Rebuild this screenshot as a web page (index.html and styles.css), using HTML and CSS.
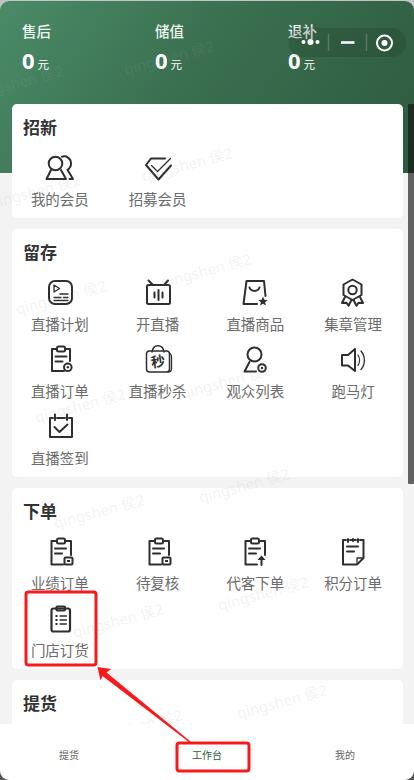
FILE: index.html
```html
<!DOCTYPE html>
<html lang="zh">
<head>
<meta charset="utf-8">
<title>工作台</title>
<link rel="stylesheet" href="styles.css">
</head>
<body>
<div class="screen">
  <main class="content">
    <header class="hero">
      <div class="stats">
        <div class="stat"><div class="stat-label">售后</div><div class="stat-value"><b>0</b><span>元</span></div></div>
        <div class="stat"><div class="stat-label">储值</div><div class="stat-value"><b>0</b><span>元</span></div></div>
        <div class="stat"><div class="stat-label">退补</div><div class="stat-value"><b>0</b><span>元</span></div></div>
      </div>
    </header>
    <div class="cards">
      <section class="card">
        <h2>招新</h2>
        <div class="grid">
          <div class="item">
            <svg class="icon" viewBox="44 151 32 32"><circle cx="55.500" cy="162.500" r="6.800"/><path d="M51 169 46.500 178H66L61 169"/><path d="M62 155.700C66 154.500 71 157 71 162.500 71 165.500 69.500 167.500 67.500 168.800L73 178H69.500"/></svg>
            <span>我的会员</span>
          </div>
          <div class="item">
            <svg class="icon" viewBox="142 151 32 32"><path d="M165 157.500H151L146 164 158.500 178.500 171 164.500"/><path class="fine" d="M151.500 164.500 157.500 170.500 170.500 157.500"/></svg>
            <span>招募会员</span>
          </div>
        </div>
      </section>
      <section class="card">
        <h2>留存</h2>
        <div class="grid">
          <div class="item">
            <svg class="icon" viewBox="44 277 32 32"><rect x="49" y="281" width="23" height="23" rx="6"/><path class="fine" d="M54 285V292L59.500 288.500Z"/><path class="fine" d="M60 294H68M54 297.500H61M63.500 297.500H68M54 300.500H68"/></svg>
            <span>直播计划</span>
          </div>
          <div class="item">
            <svg class="icon" viewBox="142 277 32 32"><rect x="147" y="285" width="23" height="19" rx="1.500"/><path d="M153 285 148.500 280.500M164 285 168 280.500M158.500 290V300M154.500 292.500V297.500M162.500 292.500V297.500"/></svg>
            <span>开直播</span>
          </div>
          <div class="item">
            <svg class="icon" viewBox="240 277 32 32"><path d="M258 304H244.500L247.500 281H265L266.500 296"/><path d="M250.500 287.500C252 292 259 292 260.500 287.500"/><path class="solid" d="M264 296.500 265.300 299.700 268.700 300 266.100 302.200 266.900 305.500 264 303.700 261.100 305.500 261.900 302.200 259.300 300 262.700 299.700Z"/></svg>
            <span>直播商品</span>
          </div>
          <div class="item">
            <svg class="icon" viewBox="338 277 32 32"><path d="M353.500 279.500 362.500 284.500V295L353.500 300 344.500 295V284.500Z"/><circle cx="353.500" cy="290" r="4.200"/><path d="M346 297 343 303 347.500 302.800 349.500 305.800 352.500 300M361 297 364 303 359.500 302.800 357.500 305.800 354.500 300"/></svg>
            <span>集章管理</span>
          </div>
          <div class="item">
            <svg class="icon" viewBox="44 344 32 32"><rect x="57" y="346.500" width="8" height="5" rx="1.500"/><path d="M57 349H52V371H64M65 349H70V361"/><path d="M55.500 356.500H66.500M55.500 361.500H62.500"/><circle cx="67.800" cy="367.300" r="3.800"/><circle class="solid" cx="67.800" cy="367.300" r="1.200"/></svg>
            <span>直播订单</span>
          </div>
          <div class="item">
            <svg class="icon slim" viewBox="142 344 32 32"><rect x="146.500" y="351" width="23" height="21" rx="3"/><path d="M152 352C153 343.500 163 343.500 164 352"/><path class="fine" d="M169.500 353C171.500 354 171.500 355 171.500 357V369C171.500 371 170 372 168 372"/><text class="sec" x="158" y="366.500" transform="rotate(-8 158 362)">秒</text></svg>
            <span>直播秒杀</span>
          </div>
          <div class="item">
            <svg class="icon" viewBox="240 344 32 32"><circle cx="255.500" cy="354.500" r="7"/><path d="M250.500 362 245.500 371.500H257"/><circle cx="263" cy="368" r="3.800"/><circle class="solid" cx="263" cy="368" r="1.200"/></svg>
            <span>观众列表</span>
          </div>
          <div class="item">
            <svg class="icon" viewBox="338 344 32 32"><path d="M356 349V371L349 365.500H343V355H349Z"/><path class="fine" d="M359 355C361 358 361 362.500 359 365.500M362 351C366.500 356 366.500 364.500 362 369.500"/></svg>
            <span>跑马灯</span>
          </div>
          <div class="item">
            <svg class="icon" viewBox="44 411 32 32"><path d="M53 418H50V437H72V418H69M57 418H65"/><path d="M55 414.500V420M67 414.500V420"/><path d="M54.500 427 59.500 432 67.500 424.500"/></svg>
            <span>直播签到</span>
          </div>
        </div>
      </section>
      <section class="card">
        <h2>下单</h2>
        <div class="grid">
          <div class="item">
            <svg class="icon" viewBox="44 536 32 32"><rect x="57" y="538.500" width="8" height="5" rx="1.500"/><path d="M57 541H51.500V564.500H63M65 541H71V555"/><path d="M55 548.500H66M55 553.500H62"/><rect x="64.500" y="557.500" width="8" height="7" rx="1"/><rect class="solid" x="67" y="560" width="3" height="2"/></svg>
            <span>业绩订单</span>
          </div>
          <div class="item">
            <svg class="icon" viewBox="142 536 32 32"><rect x="155" y="538.500" width="8" height="5" rx="1.500"/><path d="M155 541H149.500V564.500H161M163 541H169V555"/><path d="M153 548.500H164M153 553.500H160"/><rect x="162.500" y="557.500" width="8" height="7" rx="1"/><rect class="solid" x="165" y="560" width="3" height="2"/></svg>
            <span>待复核</span>
          </div>
          <div class="item">
            <svg class="icon" viewBox="240 536 32 32"><rect x="252" y="538.500" width="8" height="5" rx="1.500"/><path d="M252 541H246.500V564.500H258M260 541H266V555"/><path d="M250 548.500H261M250 553.500H257"/><path d="M262.500 565V558"/><path class="solid" d="M262.500 555.500 266.500 560H258.500Z"/></svg>
            <span>代客下单</span>
          </div>
          <div class="item">
            <svg class="icon" viewBox="338 536 32 32"><path d="M347 540H344V564.500H358L364.500 558V540H361M351 540H357"/><path d="M349 539V542M359 539V542M354 539V541"/><path d="M348 546.500H359M348 551.500H355"/><path class="fine" d="M358 564V558H364"/></svg>
            <span>积分订单</span>
          </div>
          <div class="item">
            <svg class="icon thick" viewBox="44 603 32 32"><rect x="51.500" y="608.500" width="18.500" height="23" rx="2"/><rect x="56.500" y="606.500" width="8.500" height="4" rx="1"/><path class="fine" d="M60 616H66.500M60 620H66.500M60 624H66.500"/><path class="dots" d="M55.500 616H57.500M55.500 620H57.500M55.500 624H57.500"/></svg>
            <span>门店订货</span>
          </div>
        </div>
      </section>
      <section class="card">
        <h2>提货</h2>
      </section>
    </div>

    <div class="watermarks" aria-hidden="true">
      <span class="wm w1">qingshen 侯2</span>
      <span class="wm w2">qingshen 侯2</span>
      <span class="wm w3">qingshen 侯2</span>
      <span class="wm w4">qingshen 侯2</span>
      <span class="wm w5">qingshen 侯2</span>
      <span class="wm w6">qingshen 侯2</span>
      <span class="wm w7">qingshen 侯2</span>
      <span class="wm w8">qingshen 侯2</span>
      <span class="wm w9">qingshen 侯2</span>
      <span class="wm w10">qingshen 侯2</span>
      <span class="wm w11">qingshen 侯2</span>
      <span class="wm w12">qingshen 侯2</span>
      <span class="wm w13">qingshen 侯2</span>
      <span class="wm w14">qingshen 侯2</span>
    </div>
  </main>

  <nav class="tabbar">
    <a class="tab">提货</a>
    <a class="tab active">工作台</a>
    <a class="tab">我的</a>
  </nav>

  <div class="capsule" aria-hidden="true">
    <svg viewBox="0 0 119 31" width="119" height="31">
      <circle class="c-fill" cx="15.500" cy="15" r="2"/><circle class="c-fill" cx="22.500" cy="15" r="3"/><circle class="c-fill" cx="29.500" cy="15" r="2"/>
      <path class="c-sep" d="M40.500 7V24M78.500 7V24"/>
      <path class="c-line" d="M53 15.500H66.500"/>
      <circle class="c-ring" cx="96.500" cy="16" r="7.500"/><circle class="c-fill" cx="96.500" cy="16" r="3"/>
    </svg>
  </div>

  <div class="scroll-thumb" aria-hidden="true"></div>

  <svg class="annotation" viewBox="0 0 414 780" aria-hidden="true">
    <rect class="mark" x="26" y="592" width="70" height="73" rx="2.500"/>
    <rect class="mark" x="177" y="743" width="72" height="28" rx="2.500"/>
    <path class="arrow" d="M97.500 667 111 669 106.500 672.500 190.500 741.500 189.500 742.500 102.500 676 100.500 680.500Z"/>
  </svg>
</div>
</body>
</html>
```

FILE: styles.css
```css
* { box-sizing: border-box; }
html, body { margin: 0; height: 100%; }
body {
  background: linear-gradient(#c4c4c4 0 50%, #555 50% 100%);
  font-family: "Noto Sans", "Noto Sans CJK SC", sans-serif;
  overflow: hidden;
}
.screen {
  position: relative;
  width: 414px;
  height: 780px;
  padding-top: 1px;
  display: flex;
  flex-direction: column;
}
.content {
  position: relative;
  flex: 1;
  min-height: 0;
  overflow: hidden;
  background: #f3f3f3;
  border-radius: 9px 9px 0 0;
}
.hero {
  height: 172px;
  padding: 20px 0 0 22px;
  background: linear-gradient(125deg, #4a8b68 0%, #3a6f50 45%, #2e5a3f 100%);
  color: #fff;
}
.stats { display: flex; }
.stat { flex: none; width: 133px; }
.stat-label {
  font-size: 14.500px;
  line-height: 21px;
  font-weight: 500;
  color: #eef5f0;
}
.stat-value {
  display: flex;
  align-items: baseline;
  margin-top: 5px;
  line-height: 26px;
}
.stat-value b { font-size: 22px; font-weight: 700; }
.stat-value span { font-size: 11.500px; margin-left: 3px; }

.cards {
  display: flex;
  flex-direction: column;
  gap: 11px;
  margin: -69px 11px 0 12px;
}
.card {
  background: #fff;
  border-radius: 5px;
  padding: 12px 0 1px;
}
.card h2 {
  margin: 0 0 10px 11px;
  font-size: 17px;
  line-height: 24px;
  font-weight: 700;
  color: #333;
}
.grid {
  display: grid;
  grid-template-columns: repeat(4, 97.750px);
  grid-auto-rows: 67px;
  margin-left: -1px;
}
.item {
  display: flex;
  flex-direction: column;
  align-items: center;
  padding-top: 2px;
  font-size: 14.500px;
  line-height: 20px;
  color: #6b6b6b;
}
.item span { margin-top: 5px; white-space: nowrap; }
.icon {
  width: 32px;
  height: 32px;
  flex: none;
  fill: none;
  stroke: #2e2e2e;
  stroke-width: 2;
  stroke-linejoin: round;
  stroke-linecap: round;
}
.icon .fine { stroke-width: 1.300; }
.icon .solid { fill: #2e2e2e; stroke: none; }
.icon.slim { stroke-width: 1.500; }
.icon.thick { stroke-width: 2.200; }
.icon .dots { stroke-width: 2; stroke-linecap: butt; }
.icon .sec {
  fill: #2e2e2e;
  stroke: none;
  font-size: 14px;
  font-weight: 700;
  text-anchor: middle;
  font-family: "Noto Sans CJK SC", sans-serif;
}

.watermarks { position: absolute; inset: 0; pointer-events: none; }
.wm {
  position: absolute;
  width: 100px;
  text-align: center;
  white-space: nowrap;
  font-size: 15px;
  line-height: 20px;
  color: rgba(165, 165, 165, .15);
  transform: rotate(-15deg);
}
.w1 { left: 119px; top: 46px; }
.w2 { left: -32px; top: 71px; }
.w3 { left: -15px; top: 180px; }
.w4 { left: 137px; top: 153px; }
.w5 { left: 11px; top: 286px; }
.w6 { left: 156px; top: 259px; }
.w7 { left: 30px; top: 394px; }
.w8 { left: 176px; top: 370px; }
.w9 { left: 194px; top: 474px; }
.w10 { left: 49px; top: 500px; }
.w11 { left: 213px; top: 582px; }
.w12 { left: 68px; top: 609px; }
.w13 { left: 232px; top: 690px; }
.w14 { left: 87px; top: 715px; }

.tabbar {
  flex: none;
  height: 56px;
  display: grid;
  grid-template-columns: repeat(3, 138px);
  align-items: center;
  background: #fff;
  border-radius: 0 0 9px 9px;
  padding-top: 6px;
  font-size: 10px;
  line-height: 14px;
  text-align: center;
  color: #666;
  position: relative;
}
.tab.active { color: #2e5a3f; }

.capsule {
  position: absolute;
  left: 288px;
  top: 27px;
  width: 119px;
  height: 31px;
  border-radius: 16px;
  background: rgba(20, 40, 28, .18);
  box-shadow: inset 0 0 0 1px rgba(255, 255, 255, .05);
}
.capsule svg { display: block; }
.c-fill { fill: #fff; }
.c-ring { fill: none; stroke: #fff; stroke-width: 2; }
.c-sep { stroke: rgba(255, 255, 255, .2); stroke-width: 1.500; fill: none; }
.c-line { stroke: #fff; stroke-width: 2.500; fill: none; }

.scroll-thumb {
  position: absolute;
  left: 408px;
  top: 104px;
  width: 6px;
  height: 380px;
  background: rgba(20, 20, 20, .65);
  border-radius: 1px;
}
.annotation {
  position: absolute;
  left: 0;
  top: 0;
  width: 414px;
  height: 780px;
  pointer-events: none;
}
.mark { fill: none; stroke: #f8191a; stroke-width: 3; }
.arrow { fill: #f8191a; }
```
